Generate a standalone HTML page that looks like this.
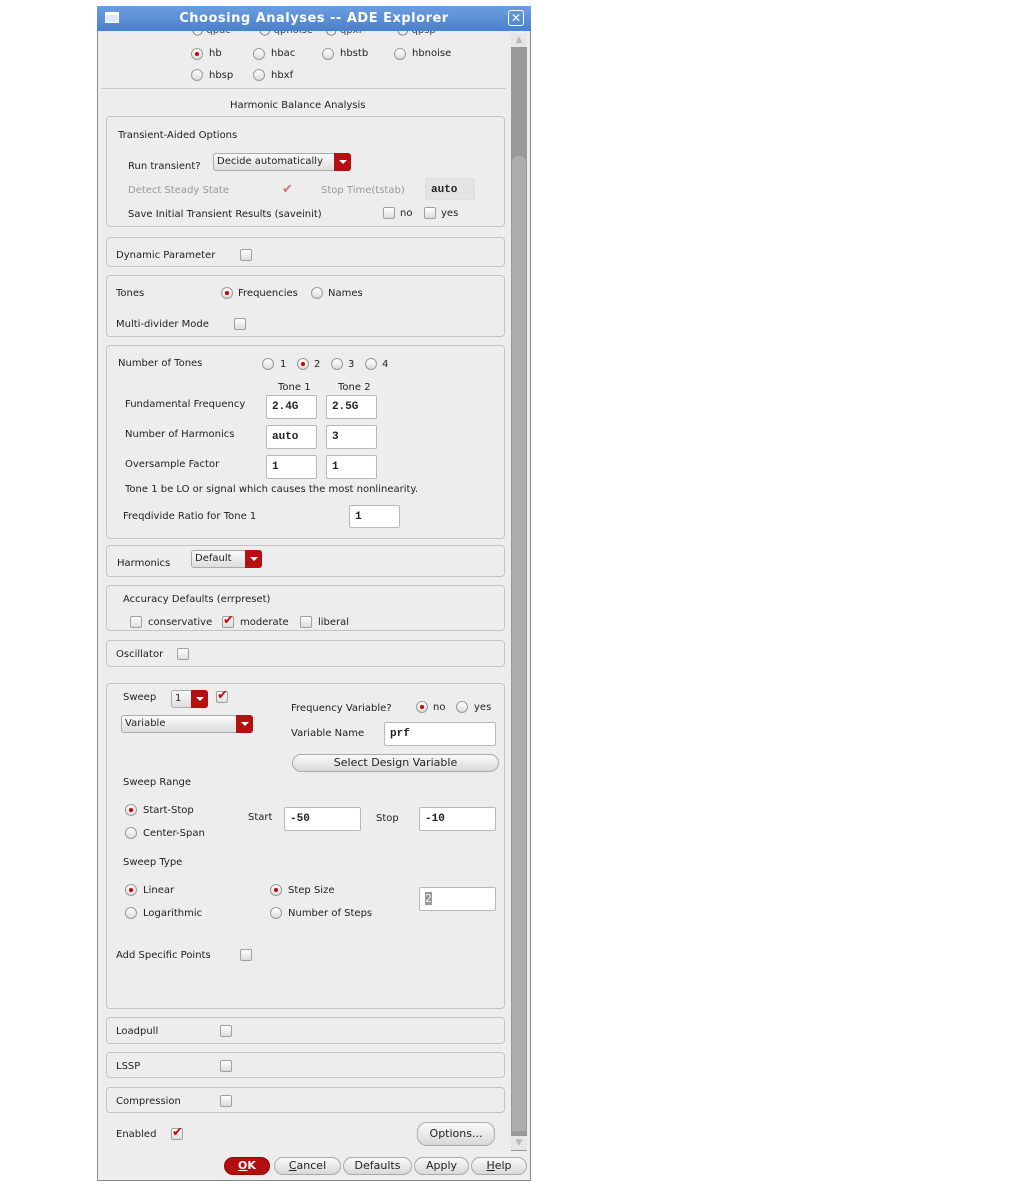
<!DOCTYPE html>
<html><head><meta charset="utf-8"><style>
*{box-sizing:border-box;margin:0;padding:0}
body{width:1011px;height:1186px;background:#fff;position:relative;overflow:hidden;font-family:"DejaVu Sans","Liberation Sans",sans-serif;font-size:10px;color:#222}
.a{position:absolute;white-space:nowrap;line-height:14px}
.win{position:absolute;left:97px;top:6px;width:434px;height:1175px;background:#ededed;border:1px solid #8a8a8a}
.title{position:absolute;left:97px;top:6px;width:434px;height:25px;background:linear-gradient(#6c9ee0,#4a80cc);color:#fff;font-weight:bold;font-size:13px;text-align:center;line-height:25px;letter-spacing:0.5px}
.grp{position:absolute;left:106px;width:399px;border:1px solid #c4c4c4;border-radius:4px}
.r{position:absolute;width:12px;height:12px;border-radius:50%;border:1px solid #9a9a9a;background:linear-gradient(#fff,#ddd)}
.r.on::after{content:"";position:absolute;left:3px;top:3px;width:4px;height:4px;border-radius:50%;background:#c00}
.c{position:absolute;width:12px;height:12px;border:1px solid #a0a0a0;border-radius:2px;background:linear-gradient(#fff,#ddd)}
.ck{position:absolute;color:#c00;font-size:13px;font-weight:bold;line-height:12px}
.in{position:absolute;background:#fff;border:1px solid #b8b8b8;border-radius:2px;font-family:"Liberation Mono","DejaVu Sans Mono",monospace;font-weight:bold;font-size:11px;padding-left:5px;line-height:22px}
.dd{position:absolute;height:18px;border:1px solid #aaa;border-radius:3px;background:linear-gradient(#fafafa,#ddd);padding-left:3px;line-height:15px}
.dd b{position:absolute;right:-1px;top:-1px;width:17px;height:18px;background:#b50f0f;border-radius:0 3px 3px 0}
.dd b::after{content:"";position:absolute;left:5px;top:7px;border-left:4px solid transparent;border-right:4px solid transparent;border-top:4px solid #fff}
.btn{position:absolute;height:18px;border:1px solid #aaa;border-radius:9px;background:linear-gradient(#fafafa,#d8d8d8);text-align:center;line-height:16px;font-size:11px}
.g{color:#999}
</style></head><body>
<div class="win"></div>
<div class="title">Choosing Analyses -- ADE Explorer</div>
<div class="a" style="left:105px;top:12px;width:14px;height:11px;border:1px solid #fff;background:#dfe8f5;border-top:3px solid #fff"></div>
<div class="a" style="left:508px;top:10px;width:16px;height:16px;border:1px solid #fff;border-radius:3px;color:#fff;text-align:center;line-height:14px;font-size:12px">✕</div>
<!-- scrollbar -->
<div class="a" style="left:511px;top:33px;width:16px;height:1118px;background:#999"></div>
<div class="a" style="left:511px;top:33px;width:16px;height:14px;background:#e6e6e6;color:#bbb;font-size:9px;text-align:center;line-height:14px">▲</div>
<div class="a" style="left:512px;top:156px;width:14px;height:975px;background:#adadad;border-radius:6px 6px 0 0"></div>
<div class="a" style="left:511px;top:1136px;width:16px;height:14px;background:#e6e6e6;color:#bbb;font-size:9px;text-align:center;line-height:14px">▼</div>
<!-- top radios (cut) -->
<div class="a" style="left:185px;top:31px;width:320px;height:7px;overflow:hidden"><div class="a" style="left:7px;top:-7px;color:#444">◯ qpac&nbsp;&nbsp;&nbsp;&nbsp;&nbsp;&nbsp;&nbsp;&nbsp;&nbsp;◯ qpnoise&nbsp;&nbsp;&nbsp;&nbsp;◯ qpxf&nbsp;&nbsp;&nbsp;&nbsp;&nbsp;&nbsp;&nbsp;&nbsp;&nbsp;&nbsp;&nbsp;◯ qpsp</div></div>
<div class="r on" style="left:191px;top:48px"></div><div class="a" style="left:209px;top:47px">hb</div>
<div class="r" style="left:253px;top:48px"></div><div class="a" style="left:271px;top:47px">hbac</div>
<div class="r" style="left:322px;top:48px"></div><div class="a" style="left:340px;top:47px">hbstb</div>
<div class="r" style="left:394px;top:48px"></div><div class="a" style="left:412px;top:47px">hbnoise</div>
<div class="r" style="left:191px;top:69px"></div><div class="a" style="left:209px;top:69px">hbsp</div>
<div class="r" style="left:253px;top:69px"></div><div class="a" style="left:271px;top:69px">hbxf</div>
<div class="a" style="left:101px;top:88px;width:405px;height:1px;background:#ccc"></div>
<div class="a" style="left:230px;top:99px">Harmonic Balance Analysis</div>
<!-- transient -->
<div class="grp" style="top:116px;height:111px"></div>
<div class="a" style="left:118px;top:129px">Transient-Aided Options</div>
<div class="a" style="left:128px;top:160px">Run transient?</div>
<div class="dd" style="left:213px;top:153px;width:138px">Decide automatically<b></b></div>
<div class="a g" style="left:128px;top:184px">Detect Steady State</div>
<div class="ck" style="left:282px;top:184px;color:#c77">✔</div>
<div class="a g" style="left:321px;top:184px">Stop Time(tstab)</div>
<div class="in" style="left:425px;top:178px;width:50px;height:22px;background:#e4e4e4;border-color:#ddd">auto</div>
<div class="a" style="left:128px;top:208px">Save Initial Transient Results (saveinit)</div>
<div class="c" style="left:383px;top:207px"></div><div class="a" style="left:400px;top:207px">no</div>
<div class="c" style="left:424px;top:207px"></div><div class="a" style="left:441px;top:207px">yes</div>
<!-- dynamic -->
<div class="grp" style="top:237px;height:30px"></div>
<div class="a" style="left:116px;top:249px">Dynamic Parameter</div>
<div class="c" style="left:240px;top:249px"></div>
<!-- tones -->
<div class="grp" style="top:275px;height:62px"></div>
<div class="a" style="left:116px;top:287px">Tones</div>
<div class="r on" style="left:221px;top:287px"></div><div class="a" style="left:238px;top:287px">Frequencies</div>
<div class="r" style="left:311px;top:287px"></div><div class="a" style="left:328px;top:287px">Names</div>
<div class="a" style="left:116px;top:318px">Multi-divider Mode</div>
<div class="c" style="left:234px;top:318px"></div>
<!-- number of tones -->
<div class="grp" style="top:345px;height:194px"></div>
<div class="a" style="left:118px;top:357px">Number of Tones</div>
<div class="r" style="left:262px;top:358px"></div><div class="a" style="left:280px;top:358px">1</div>
<div class="r on" style="left:297px;top:358px"></div><div class="a" style="left:314px;top:358px">2</div>
<div class="r" style="left:331px;top:358px"></div><div class="a" style="left:348px;top:358px">3</div>
<div class="r" style="left:365px;top:358px"></div><div class="a" style="left:382px;top:358px">4</div>
<div class="a" style="left:278px;top:381px">Tone 1</div><div class="a" style="left:338px;top:381px">Tone 2</div>
<div class="a" style="left:125px;top:398px">Fundamental Frequency</div>
<div class="in" style="left:266px;top:395px;width:51px;height:24px">2.4G</div>
<div class="in" style="left:326px;top:395px;width:51px;height:24px">2.5G</div>
<div class="a" style="left:125px;top:428px">Number of Harmonics</div>
<div class="in" style="left:266px;top:425px;width:51px;height:24px">auto</div>
<div class="in" style="left:326px;top:425px;width:51px;height:24px">3</div>
<div class="a" style="left:125px;top:458px">Oversample Factor</div>
<div class="in" style="left:266px;top:455px;width:51px;height:24px">1</div>
<div class="in" style="left:326px;top:455px;width:51px;height:24px">1</div>
<div class="a" style="left:125px;top:483px">Tone 1 be LO or signal which causes the most nonlinearity.</div>
<div class="a" style="left:123px;top:510px">Freqdivide Ratio for Tone 1</div>
<div class="in" style="left:349px;top:505px;width:51px;height:23px">1</div>
<!-- harmonics -->
<div class="grp" style="top:545px;height:32px"></div>
<div class="a" style="left:117px;top:557px">Harmonics</div>
<div class="dd" style="left:191px;top:550px;width:71px">Default<b></b></div>
<!-- accuracy -->
<div class="grp" style="top:585px;height:46px"></div>
<div class="a" style="left:123px;top:593px">Accuracy Defaults (errpreset)</div>
<div class="c" style="left:130px;top:616px"></div><div class="a" style="left:148px;top:616px">conservative</div>
<div class="c" style="left:222px;top:616px"></div><div class="ck" style="left:223px;top:615px">✔</div><div class="a" style="left:240px;top:616px">moderate</div>
<div class="c" style="left:300px;top:616px"></div><div class="a" style="left:318px;top:616px">liberal</div>
<!-- oscillator -->
<div class="grp" style="top:640px;height:27px"></div>
<div class="a" style="left:116px;top:648px">Oscillator</div>
<div class="c" style="left:177px;top:648px"></div>
<!-- sweep -->
<div class="grp" style="top:683px;height:326px"></div>
<div class="a" style="left:123px;top:691px">Sweep</div>
<div class="dd" style="left:171px;top:690px;width:37px">1<b></b></div>
<div class="c" style="left:216px;top:691px"></div><div class="ck" style="left:217px;top:690px">✔</div>
<div class="dd" style="left:121px;top:715px;width:132px">Variable<b></b></div>
<div class="a" style="left:291px;top:702px">Frequency Variable?</div>
<div class="r on" style="left:416px;top:701px"></div><div class="a" style="left:433px;top:701px">no</div>
<div class="r" style="left:456px;top:701px"></div><div class="a" style="left:474px;top:701px">yes</div>
<div class="a" style="left:291px;top:727px">Variable Name</div>
<div class="in" style="left:384px;top:722px;width:112px;height:24px">prf</div>
<div class="btn" style="left:292px;top:754px;width:207px">Select Design Variable</div>
<div class="a" style="left:123px;top:776px">Sweep Range</div>
<div class="r on" style="left:125px;top:804px"></div><div class="a" style="left:143px;top:804px">Start-Stop</div>
<div class="r" style="left:125px;top:827px"></div><div class="a" style="left:143px;top:827px">Center-Span</div>
<div class="a" style="left:248px;top:811px">Start</div>
<div class="in" style="left:284px;top:807px;width:77px;height:24px">-50</div>
<div class="a" style="left:376px;top:812px">Stop</div>
<div class="in" style="left:419px;top:807px;width:77px;height:24px">-10</div>
<div class="a" style="left:123px;top:856px">Sweep Type</div>
<div class="r on" style="left:125px;top:884px"></div><div class="a" style="left:143px;top:884px">Linear</div>
<div class="r" style="left:125px;top:907px"></div><div class="a" style="left:143px;top:907px">Logarithmic</div>
<div class="r on" style="left:270px;top:884px"></div><div class="a" style="left:288px;top:884px">Step Size</div>
<div class="r" style="left:270px;top:907px"></div><div class="a" style="left:288px;top:907px">Number of Steps</div>
<div class="in" style="left:419px;top:887px;width:77px;height:24px;font-weight:normal;font-family:'DejaVu Sans',sans-serif"><span style="background:#999;color:#eee">2</span></div>
<div class="a" style="left:116px;top:949px">Add Specific Points</div>
<div class="c" style="left:240px;top:949px"></div>
<!-- loadpull etc -->
<div class="grp" style="top:1017px;height:27px"></div>
<div class="a" style="left:116px;top:1025px">Loadpull</div><div class="c" style="left:220px;top:1025px"></div>
<div class="grp" style="top:1052px;height:26px"></div>
<div class="a" style="left:116px;top:1060px">LSSP</div><div class="c" style="left:220px;top:1060px"></div>
<div class="grp" style="top:1087px;height:26px"></div>
<div class="a" style="left:116px;top:1095px">Compression</div><div class="c" style="left:220px;top:1095px"></div>
<div class="a" style="left:116px;top:1128px">Enabled</div>
<div class="c" style="left:171px;top:1128px"></div><div class="ck" style="left:172px;top:1127px">✔</div>
<div class="btn" style="left:417px;top:1122px;width:78px;height:24px;border-radius:10px;line-height:22px">Options...</div>
<!-- bottom buttons -->
<div class="btn" style="left:224px;top:1157px;width:46px;background:#b30f0f;border-color:#900;color:#fff;font-weight:bold"><u>O</u>K</div>
<div class="btn" style="left:274px;top:1157px;width:67px"><u>C</u>ancel</div>
<div class="btn" style="left:343px;top:1157px;width:69px">Defaults</div>
<div class="btn" style="left:414px;top:1157px;width:55px">Apply</div>
<div class="btn" style="left:471px;top:1157px;width:56px"><u>H</u>elp</div>
</body></html>
